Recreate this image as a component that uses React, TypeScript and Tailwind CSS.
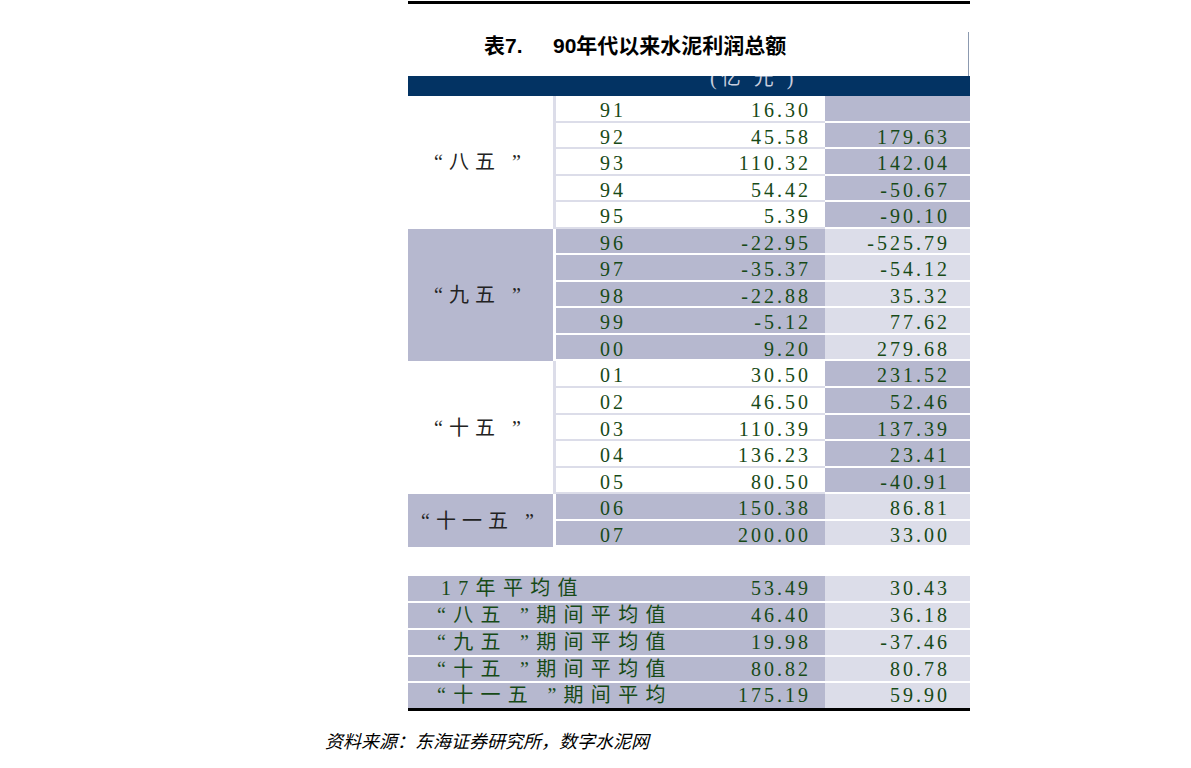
import React from "react";

type Row = [string, string, string];
type Group = { label: string; shade: boolean; rows: Row[] };

const groups: Group[] = [
  {
    label: "“八五 ”",
    shade: false,
    rows: [
      ["91", "16.30", ""],
      ["92", "45.58", "179.63"],
      ["93", "110.32", "142.04"],
      ["94", "54.42", "-50.67"],
      ["95", "5.39", "-90.10"],
    ],
  },
  {
    label: "“九五 ”",
    shade: true,
    rows: [
      ["96", "-22.95", "-525.79"],
      ["97", "-35.37", "-54.12"],
      ["98", "-22.88", "35.32"],
      ["99", "-5.12", "77.62"],
      ["00", "9.20", "279.68"],
    ],
  },
  {
    label: "“十五 ”",
    shade: false,
    rows: [
      ["01", "30.50", "231.52"],
      ["02", "46.50", "52.46"],
      ["03", "110.39", "137.39"],
      ["04", "136.23", "23.41"],
      ["05", "80.50", "-40.91"],
    ],
  },
  {
    label: "“十一五 ”",
    shade: true,
    rows: [
      ["06", "150.38", "86.81"],
      ["07", "200.00", "33.00"],
    ],
  },
];

const summary: [string, string, string][] = [
  ["17年平均值", "53.49", "30.43"],
  ["“八五 ”期间平均值", "46.40", "36.18"],
  ["“九五 ”期间平均值", "19.98", "-37.46"],
  ["“十五 ”期间平均值", "80.82", "80.78"],
  ["“十一五 ”期间平均", "175.19", "59.90"],
];

const serif = "font-['Liberation_Serif','Noto_Sans_CJK_SC',serif]";

function GroupBlock({ g }: { g: Group }) {
  const col1 = g.shade
    ? "bg-[#b6b8cf] border-white"
    : "bg-white border-[#dcdde9]";
  const col2 = g.shade
    ? "bg-[#b6b8cf] border-white"
    : "bg-white border-[#dcdde9]";
  const col3 = g.shade ? "bg-[#dcdde9]" : "bg-[#b6b8cf]";
  return (
    <div className="flex">
      <div
        className={`w-[148px] border-r-[3px] flex items-center justify-center ${col1}`}
      >
        <span
          className={`${serif} text-[20px] tracking-[6px] text-[#222] leading-[24px] whitespace-pre`}
        >
          {g.label}
        </span>
      </div>
      <div className="flex-1 flex flex-col">
        {g.rows.map((r) => (
          <div key={r[0]} className="flex h-[26.55px]">
            <div
              className={`w-[269px] border-b-2 flex justify-between pl-[44px] pr-[14px] pt-[3px] ${col2}`}
            >
              <span
                className={`${serif} text-[20px] leading-[22px] tracking-[3px] text-[#174a17]`}
              >
                {r[0]}
              </span>
              <span
                className={`${serif} text-[20px] leading-[22px] tracking-[3px] text-[#174a17]`}
              >
                {r[1]}
              </span>
            </div>
            <div
              className={`flex-1 border-b-2 border-white flex justify-end pr-[20px] pt-[3px] ${col3}`}
            >
              <span
                className={`${serif} text-[20px] leading-[22px] tracking-[3px] text-[#174a17]`}
              >
                {r[2]}
              </span>
            </div>
          </div>
        ))}
      </div>
    </div>
  );
}

export default function App() {
  return (
    <div className="w-[1191px] h-[768px] bg-white overflow-hidden">
      <div className="ml-[408px] w-[562px] flex flex-col">
        <div className="mt-[1px] h-[3px] bg-black" />
        <div className="h-[72px] flex justify-between">
          <div className="pt-[29px] pl-[76px] flex font-['Liberation_Sans','Noto_Sans_CJK_SC',sans-serif] font-bold text-[21px] leading-[26px] text-black">
            <span className="w-[69px]">表7.</span>
            <span>90年代以来水泥利润总额</span>
          </div>
          <div className="self-end h-[44px] w-px bg-[#8c9ab0] mr-px" />
        </div>
        <div className="h-[20px] bg-[#033363] overflow-hidden">
          <div
            className={`pl-[302px] -mt-[8px] ${serif} text-[20px] leading-[20px] text-[#c9cede] tracking-[4px] whitespace-pre`}
          >
            (亿 元 )
          </div>
        </div>
        {groups.map((g) => (
          <GroupBlock key={g.label} g={g} />
        ))}
        <div className="h-[27px] bg-white" />
        {summary.map((s, i) => (
          <div key={s[0]} className="flex h-[26.8px] border-t-2 border-white">
            <div
              className={`w-[417px] bg-[#b6b8cf] flex justify-between pr-[14px] pt-[1px] ${
                i === 0 ? "pl-[33px]" : "pl-[29px]"
              }`}
            >
              <span
                className={`${serif} text-[20px] leading-[22px] tracking-[7.3px] text-[#174a17] whitespace-pre`}
              >
                {s[0]}
              </span>
              <span
                className={`${serif} text-[20px] leading-[22px] tracking-[3px] text-[#174a17]`}
              >
                {s[1]}
              </span>
            </div>
            <div className="flex-1 bg-[#dcdde9] flex justify-end pr-[20px] pt-[1px]">
              <span
                className={`${serif} text-[20px] leading-[22px] tracking-[3px] text-[#174a17]`}
              >
                {s[2]}
              </span>
            </div>
          </div>
        ))}
        <div className="h-[3px] bg-black" />
      </div>
      <div className="ml-[325px] mt-[17px] italic font-['Noto_Sans_CJK_SC',sans-serif] text-[18px] leading-[24px] text-black">
        资料来源：东海证券研究所，数字水泥网
      </div>
    </div>
  );
}
